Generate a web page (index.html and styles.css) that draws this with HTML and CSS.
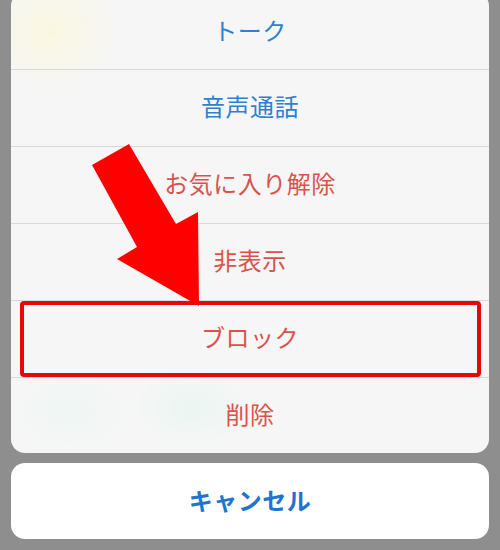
FILE: index.html
```html
<!DOCTYPE html>
<html lang="ja">
<head>
<meta charset="utf-8">
<link rel="stylesheet" href="styles.css">
</head>
<body>
<div class="screen">
  <div class="sheet">
    <div class="row first blue">トーク</div>
    <div class="row blue">音声通話</div>
    <div class="row red">お気に入り解除</div>
    <div class="row red">非表示</div>
    <div class="row red highlight">ブロック<span class="box"></span></div>
    <div class="row red last">削除</div>
  </div>
  <div class="cancel">キャンセル</div>
  <svg class="arrow" width="500" height="550" viewBox="0 0 500 550">
    <polygon points="129,152 176,232 198,220 199,314 117,267 137,255 92,173" fill="#ff0000"/>
  </svg>
</div>
</body>
</html>
```
FILE: styles.css
```css
html, body {
  margin: 0;
  padding: 0;
}
body {
  background: #8e8e8e;
  font-family: "Noto Sans CJK JP", "Noto Sans", sans-serif;
  width: 500px;
  height: 550px;
  overflow: hidden;
}
.screen {
  position: relative;
  width: 500px;
  height: 550px;
  padding: 0 11px;
  box-sizing: border-box;
}
.sheet {
  margin-top: -8px;
  border-radius: 14px;
  overflow: hidden;
  background:
    radial-gradient(ellipse 70px 60px at 40px 40px, rgba(255, 248, 200, 0.5), rgba(255, 248, 200, 0) 100%),
    radial-gradient(ellipse 60px 40px at 60px 420px, rgba(225, 245, 235, 0.35), rgba(225, 245, 235, 0) 100%),
    radial-gradient(ellipse 60px 40px at 180px 415px, rgba(220, 245, 232, 0.45), rgba(220, 245, 232, 0) 100%),
    #f6f6f7;
}
.row {
  position: relative;
  height: 77px;
  box-sizing: border-box;
  padding-bottom: 5px;
  border-top: 1px solid #d9d9db;
  display: flex;
  align-items: center;
  justify-content: center;
  font-size: 24px;
  letter-spacing: 0.5px;
}
.row.first {
  border-top: none;
  height: 77px;
  padding-top: 2px;
  padding-bottom: 4px;
}
.row.last {
  height: 76px;
}
.blue {
  color: #2f7fd2;
}
.red {
  color: #d9534c;
}
.box {
  position: absolute;
  left: 9px;
  right: 8px;
  top: 0;
  bottom: 0;
  border: 4.5px solid #e40808;
  border-radius: 4px;
}
.cancel {
  margin-top: 10px;
  height: 76px;
  box-sizing: border-box;
  padding-bottom: 4px;
  border-radius: 14px;
  background: #ffffff;
  display: flex;
  align-items: center;
  justify-content: center;
  font-size: 24px;
  font-weight: 700;
  letter-spacing: 0.5px;
  color: #1f74cf;
}
.arrow {
  position: absolute;
  left: 0;
  top: 0;
  pointer-events: none;
}
```
